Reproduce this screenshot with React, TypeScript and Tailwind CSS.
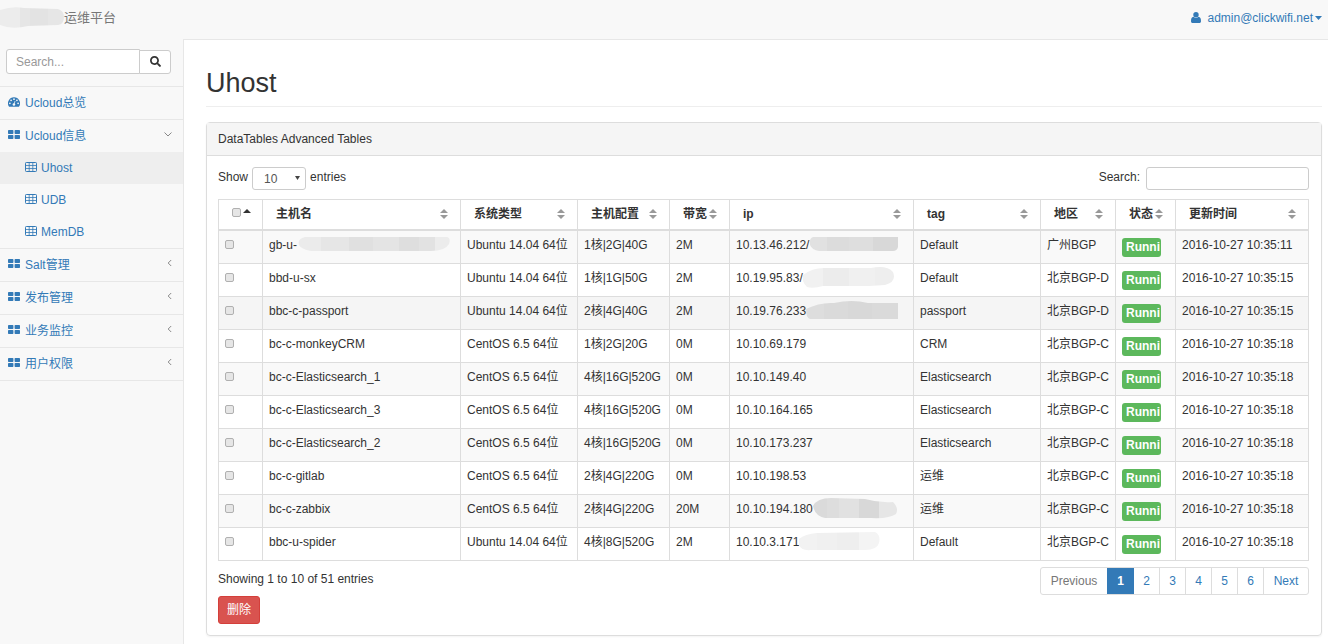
import React from "react";
import { FaSearch } from "react-icons/fa";

const FONT = "font-['Liberation_Sans','Noto_Sans_CJK_SC',sans-serif]";

type Blur = { w: number; h: number; d: string; shades: [number, number, string][] };

const blurs: Record<string, Blur> = {
  brand: {
    w: 64, h: 21, d: "M0 3Q12-1 24 1L58 2Q64 4 64 10Q64 17 58 18L28 19Q12 23 0 18Z",
    shades: [[0, 20, "#ececec"], [20, 10, "#e6e6e6"], [30, 18, "#e3e3e3"], [48, 16, "#e6e6e6"]],
  },
  host: {
    w: 154, h: 15, d: "M8 0H150Q154 1 152 7Q148 14 134 14H14Q4 12 2 8Q0 2 8 0Z",
    shades: [[0, 24, "#ebebeb"], [24, 28, "#e6e6e6"], [52, 24, "#e0e0e0"], [76, 26, "#e4e4e4"], [102, 20, "#dedede"], [122, 16, "#e2e2e2"], [138, 16, "#ececec"]],
  },
  ipA: {
    w: 90, h: 15, d: "M4 0H89V10Q88 14 84 14H10Q3 13 1 8Q0 1 4 0Z",
    shades: [[0, 18, "#e1e1e1"], [18, 22, "#dcdcdc"], [40, 24, "#dedede"], [64, 26, "#d8d8d8"]],
  },
  ipB: {
    w: 92, h: 21, d: "M0 8Q10 0 24 1L68 1Q84-2 90 5Q94 15 82 18L66 19H20Q10 22 4 20Q-2 14 0 8Z",
    shades: [[0, 20, "#f1f1f1"], [20, 26, "#ececec"], [46, 26, "#f0f0f0"], [72, 20, "#eeeeee"]],
  },
  ipC: {
    w: 92, h: 19, d: "M0 8Q14 1 28 2Q46-2 62 2H92V18H4Q0 17 0 8Z",
    shades: [[0, 18, "#dddddd"], [18, 24, "#dadada"], [42, 24, "#d8d8d8"], [66, 26, "#dadada"]],
  },
  ipD: {
    w: 85, h: 21, d: "M0 8Q4 0 18 0L52 1Q66 5 80 4Q86 10 83 16Q76 21 58 20H12Q2 18 0 8Z",
    shades: [[0, 14, "#dadada"], [14, 12, "#dddddd"], [26, 20, "#e1e1e1"], [46, 20, "#d8d8d8"], [66, 19, "#e6e6e6"]],
  },
  ipE: {
    w: 81, h: 21, d: "M0 8Q6 3 18 2L76 1Q82 4 80 12Q78 19 66 19H12Q2 20 0 14Z",
    shades: [[0, 18, "#f2f2f2"], [18, 20, "#f0f0f0"], [38, 22, "#eeeeee"], [60, 21, "#f4f4f4"]],
  },
};

function Smudge({ kind }: { kind: string }) {
  const b = blurs[kind];
  return (
    <svg width={b.w} height={b.h} viewBox={`0 0 ${b.w} ${b.h}`} className="shrink-0" aria-hidden="true">
      <clipPath id={`smudge-${kind}`}>
        <path d={b.d} />
      </clipPath>
      <g clipPath={`url(#smudge-${kind})`}>
        {b.shades.map(([x, w, c]) => (
          <rect key={x} x={x} y="0" width={w} height={b.h} fill={c} />
        ))}
      </g>
    </svg>
  );
}

const Dashboard = () => (
  <svg width="12" height="10" viewBox="0 0 14 11" className="mb-0.5 shrink-0" aria-hidden="true">
    <path fill="currentColor" d="M7 0a7 7 0 0 0-5.9 10.8c.1.2.2.2.4.2h11c.2 0 .3 0 .4-.2A7 7 0 0 0 7 0Z" />
    <g fill="#f8f8f8">
      <circle cx="2.2" cy="7" r="1" />
      <circle cx="3.6" cy="3.6" r="1" />
      <circle cx="7" cy="2.2" r="1" />
      <circle cx="10.4" cy="3.6" r="1" />
      <circle cx="11.8" cy="7" r="1" />
    </g>
    <path d="M7 8.6 8.2 4.4" stroke="#f8f8f8" strokeWidth=".9" />
    <circle cx="6.9" cy="8.4" r="1.5" fill="#f8f8f8" />
  </svg>
);

const Blocks = () => (
  <svg width="12" height="9" viewBox="0 0 12 9" className="mb-[3px] shrink-0" fill="currentColor" aria-hidden="true">
    <rect x="0" y="0" width="5.4" height="4" rx=".7" />
    <rect x="6.600" y="0" width="5.4" height="4" rx=".7" />
    <rect x="0" y="5" width="5.4" height="4" rx=".7" />
    <rect x="6.600" y="5" width="5.4" height="4" rx=".7" />
  </svg>
);

const Grid = () => (
  <svg width="12" height="10" viewBox="0 0 12 10" className="mb-0.5 shrink-0" fill="none" stroke="currentColor" aria-hidden="true">
    <rect x=".5" y=".5" width="11" height="9" rx=".8" />
    <path d="M1 3.500H11M1 6.500H11M4.200 1V9.500M7.800 1V9.500" strokeWidth=".8" />
  </svg>
);

const Person = () => (
  <svg width="10" height="11" viewBox="0 0 10 11" className="shrink-0" fill="currentColor" aria-hidden="true">
    <circle cx="5" cy="2.8" r="2.7" />
    <path d="M2.400 4.800C.8 5 0 6.400 0 8.900C0 10.300.6 11 1.800 11h6.400c1.200 0 1.800-.7 1.800-2.100C10 6.400 9.200 5 7.600 4.800a3.500 3.500 0 0 1-5.200 0Z" />
  </svg>
);

const SortBoth = () => (
  <svg width="8" height="10" viewBox="0 0 8 10" className="shrink-0 text-[#999]" fill="currentColor" aria-hidden="true">
    <path d="M4 0 8 4H0ZM0 6h8L4 10Z" />
  </svg>
);

function Chevron({ open }: { open?: boolean }) {
  return open ? (
    <svg width="8" height="5" viewBox="0 0 8 5" className="mb-1 ml-auto" fill="none" stroke="#888" aria-hidden="true">
      <path d="M.5.5 4 4 7.500.5" />
    </svg>
  ) : (
    <svg width="5" height="8" viewBox="0 0 5 8" className="mb-1 ml-auto" fill="none" stroke="#888" aria-hidden="true">
      <path d="M4.200 1 1.200 4l3 3" />
    </svg>
  );
}

function NavItem({ label, icon, chevron, children }: { label: string; icon: React.ReactNode; chevron?: React.ReactNode; children?: React.ReactNode }) {
  return (
    <li className="border-b border-[#e7e7e7]">
      <a href="#" className="flex h-8 items-center gap-[5px] pl-2 pr-[11px]">
        {icon}
        <span>{label}</span>
        {chevron}
      </a>
      {children}
    </li>
  );
}

const checkboxClass =
  "block size-[9px] shrink-0 appearance-none rounded-[2px] border border-[#b0b0b0] bg-[#e6e6e6] checked:bg-[#337ab7]";

const columns: [string, string][] = [
  ["主机名", "w-[198px]"],
  ["系统类型", "w-[117px]"],
  ["主机配置", "w-[92px]"],
  ["带宽", "w-[60px]"],
  ["ip", "w-[184px]"],
  ["tag", "w-[127px]"],
  ["地区", "w-[75px]"],
  ["状态", "w-[60px]"],
  ["更新时间", "w-[133px]"],
];

type Host = { name: string; os: string; conf: string; band: string; ip: string; tag: string; zone: string; time: string; nameBlur?: string; ipBlur?: string; active?: boolean };

const U = "Ubuntu 14.04 64位";
const C = "CentOS 6.5 64位";
const T18 = "2016-10-27 10:35:18";

const hosts: Host[] = [
  { name: "gb-u-", os: U, conf: "1核|2G|40G", band: "2M", ip: "10.13.46.212/", tag: "Default", zone: "广州BGP", time: "2016-10-27 10:35:11", nameBlur: "host", ipBlur: "ipA" },
  { name: "bbd-u-sx", os: U, conf: "1核|1G|50G", band: "2M", ip: "10.19.95.83/", tag: "Default", zone: "北京BGP-D", time: "2016-10-27 10:35:15", ipBlur: "ipB" },
  { name: "bbc-c-passport", os: U, conf: "2核|4G|40G", band: "2M", ip: "10.19.76.233", tag: "passport", zone: "北京BGP-D", time: "2016-10-27 10:35:15", ipBlur: "ipC", active: true },
  { name: "bc-c-monkeyCRM", os: C, conf: "1核|2G|20G", band: "0M", ip: "10.10.69.179", tag: "CRM", zone: "北京BGP-C", time: T18 },
  { name: "bc-c-Elasticsearch_1", os: C, conf: "4核|16G|520G", band: "0M", ip: "10.10.149.40", tag: "Elasticsearch", zone: "北京BGP-C", time: T18 },
  { name: "bc-c-Elasticsearch_3", os: C, conf: "4核|16G|520G", band: "0M", ip: "10.10.164.165", tag: "Elasticsearch", zone: "北京BGP-C", time: T18 },
  { name: "bc-c-Elasticsearch_2", os: C, conf: "4核|16G|520G", band: "0M", ip: "10.10.173.237", tag: "Elasticsearch", zone: "北京BGP-C", time: T18 },
  { name: "bc-c-gitlab", os: C, conf: "2核|4G|220G", band: "0M", ip: "10.10.198.53", tag: "运维", zone: "北京BGP-C", time: T18 },
  { name: "bc-c-zabbix", os: C, conf: "2核|4G|220G", band: "20M", ip: "10.10.194.180", tag: "运维", zone: "北京BGP-C", time: T18, ipBlur: "ipD" },
  { name: "bbc-u-spider", os: U, conf: "4核|8G|520G", band: "2M", ip: "10.10.3.171", tag: "Default", zone: "北京BGP-C", time: T18, ipBlur: "ipE" },
];

function Cell({ children }: { children: React.ReactNode }) {
  return (
    <td className="border border-[#ddd] p-0">
      <div className="flex h-8 items-center whitespace-nowrap pb-[5px] pl-[6px]">{children}</div>
    </td>
  );
}

function HostRow({ host, index }: { host: Host; index: number }) {
  const bg = host.active ? "bg-[#f5f5f5]" : index % 2 === 0 ? "bg-[#f9f9f9]" : "bg-white";
  return (
    <tr className={bg}>
      <Cell>
        <input type="checkbox" aria-label={host.name} className={checkboxClass} />
      </Cell>
      <Cell>{host.name}{host.nameBlur && <Smudge kind={host.nameBlur} />}</Cell>
      <Cell>{host.os}</Cell>
      <Cell>{host.conf}</Cell>
      <Cell>{host.band}</Cell>
      <Cell>{host.ip}{host.ipBlur && <Smudge kind={host.ipBlur} />}</Cell>
      <Cell>{host.tag}</Cell>
      <Cell>{host.zone}</Cell>
      <td className="border border-[#ddd] p-0 pl-[6px]">
        <div className="h-[19px] w-[39px] rounded-[3px] bg-[#5cb85c] pl-1 font-bold leading-[19px] text-white">
          Runni
        </div>
      </td>
      <Cell>{host.time}</Cell>
    </tr>
  );
}

export default function App() {
  return (
    <div className={`flex min-h-screen flex-col bg-[#f8f8f8] text-[12px] leading-[18px] text-[#333] ${FONT}`}>
      <header className="flex h-[39px] items-center justify-between pb-1 pr-[6px]">
        <a href="#" className="flex items-center text-[13px] text-[#777]">
          <Smudge kind="brand" />
          运维平台
        </a>
        <a href="#" className="flex items-center text-[#337ab7]">
          <Person />
          <span className="ml-[6px]">admin@clickwifi.net</span>
          <svg width="7" height="4" viewBox="0 0 7 4" className="ml-[2px]" fill="currentColor" aria-hidden="true">
            <path d="M0 0h7L3.500 4Z" />
          </svg>
        </a>
      </header>

      <div className="flex grow">
        <nav className="w-[183px] shrink-0 text-[#337ab7]">
          <form className="flex border-b border-[#e7e7e7] pb-3 pl-[6px] pr-3 pt-[10px]" onSubmit={(e) => e.preventDefault()}>
            <input
              type="text"
              aria-label="Search"
              placeholder="Search..."
              className="h-[25px] w-0 grow rounded-l-[3px] border border-[#ccc] bg-white px-[9px] text-[#555] outline-none placeholder:text-[#999]"
            />
            <button type="submit" aria-label="Search" className="-ml-px flex h-[24px] w-[32px] items-center justify-center self-center rounded-r-[3px] border border-[#ccc] bg-white text-[#333]">
              <FaSearch size={11} />
            </button>
          </form>
          <ul>
            <NavItem label="Ucloud总览" icon={<Dashboard />} />
            <NavItem label="Ucloud信息" icon={<Blocks />} chevron={<Chevron open />}>
              <ul>
                {["Uhost", "UDB", "MemDB"].map((name) => (
                  <li key={name}>
                    <a href="#" className={`flex h-8 items-center gap-1 pl-[25px] ${name === "Uhost" ? "bg-[#eee]" : ""}`}>
                      <Grid />
                      {name}
                    </a>
                  </li>
                ))}
              </ul>
            </NavItem>
            {["Salt管理", "发布管理", "业务监控", "用户权限"].map((name) => (
              <NavItem key={name} label={name} icon={<Blocks />} chevron={<Chevron />} />
            ))}
          </ul>
        </nav>

        <main className="min-w-0 grow border-l border-t border-[#e7e7e7] bg-white pb-2 pl-[22px] pr-[6px]">
          <h1 className="border-b border-[#eee] pb-2 pt-[28px] text-[27px] leading-[30px]">Uhost</h1>

          <section className="mt-[15px] rounded-[4px] border border-[#ddd] shadow-xs">
            <h2 className="border-b border-[#ddd] bg-[#f5f5f5] px-[11px] py-[7px]">DataTables Advanced Tables</h2>
            <div className="py-[11px] pl-[11px] pr-3">
              <div className="flex items-start justify-between leading-5">
                <label className="flex items-start gap-1">
                  Show
                  <span className="relative">
                    <select className="block h-[23px] w-[54px] appearance-none rounded-[3px] border border-[#ccc] bg-white pl-[11px] text-[#555]">
                      <option>10</option>
                      <option>25</option>
                      <option>50</option>
                      <option>100</option>
                    </select>
                    <svg width="5" height="4" viewBox="0 0 5 4" className="pointer-events-none absolute right-[6px] top-[9px]" fill="#444" aria-hidden="true">
                      <path d="M0 0h5L2.500 4Z" />
                    </svg>
                  </span>
                  entries
                </label>
                <label className="flex items-start gap-[6px]">
                  Search:
                  <input type="search" className="h-[23px] w-[163px] rounded-[3px] border border-[#ccc] bg-white px-2 outline-none" />
                </label>
              </div>

              <table className="mt-[9px] w-full table-fixed border-collapse border border-[#ddd]">
                <thead>
                  <tr>
                    <th className="w-[44px] border border-b-2 border-[#ddd] p-0">
                      <div className="flex h-[29px] items-center gap-[2px] pb-1 pl-[13px]">
                        <input type="checkbox" aria-label="Select all" className={checkboxClass} />
                        <svg width="8" height="4" viewBox="0 0 8 4" className="mb-1 shrink-0" fill="#333" aria-hidden="true">
                          <path d="M4 0 8 4H0Z" />
                        </svg>
                      </div>
                    </th>
                    {columns.map(([name, width]) => (
                      <th key={name} className={`${width} border border-b-2 border-[#ddd] p-0 text-left`}>
                        <div className="flex h-[29px] items-center justify-between whitespace-nowrap pb-px pl-[13px] pr-3">
                          {name}
                          <SortBoth />
                        </div>
                      </th>
                    ))}
                  </tr>
                </thead>
                <tbody>
                  {hosts.map((h, i) => (
                    <HostRow key={h.name} host={h} index={i} />
                  ))}
                </tbody>
              </table>

              <div className="mt-[6px] flex items-start justify-between">
                <div>
                  <p className="pt-[3px]">Showing 1 to 10 of 51 entries</p>
                  <button type="button" className="mt-2 flex h-7 items-center rounded-[3px] border border-[#d43f3a] bg-[#d9534f] px-2 text-white">
                    删除
                  </button>
                </div>
                <div className="flex h-7 overflow-hidden rounded-[3px] border border-[#ddd] text-[#337ab7]">
                  <button type="button" className="w-[66px] text-[#777]">Previous</button>
                  <button type="button" className="w-[27px] bg-[#337ab7] font-bold text-white">1</button>
                  {["2", "3", "4", "5", "6"].map((n) => (
                    <button key={n} type="button" className="w-[26px] border-r border-[#ddd]">{n}</button>
                  ))}
                  <button type="button" className="w-[44px]">Next</button>
                </div>
              </div>
            </div>
          </section>
        </main>
      </div>
    </div>
  );
}
